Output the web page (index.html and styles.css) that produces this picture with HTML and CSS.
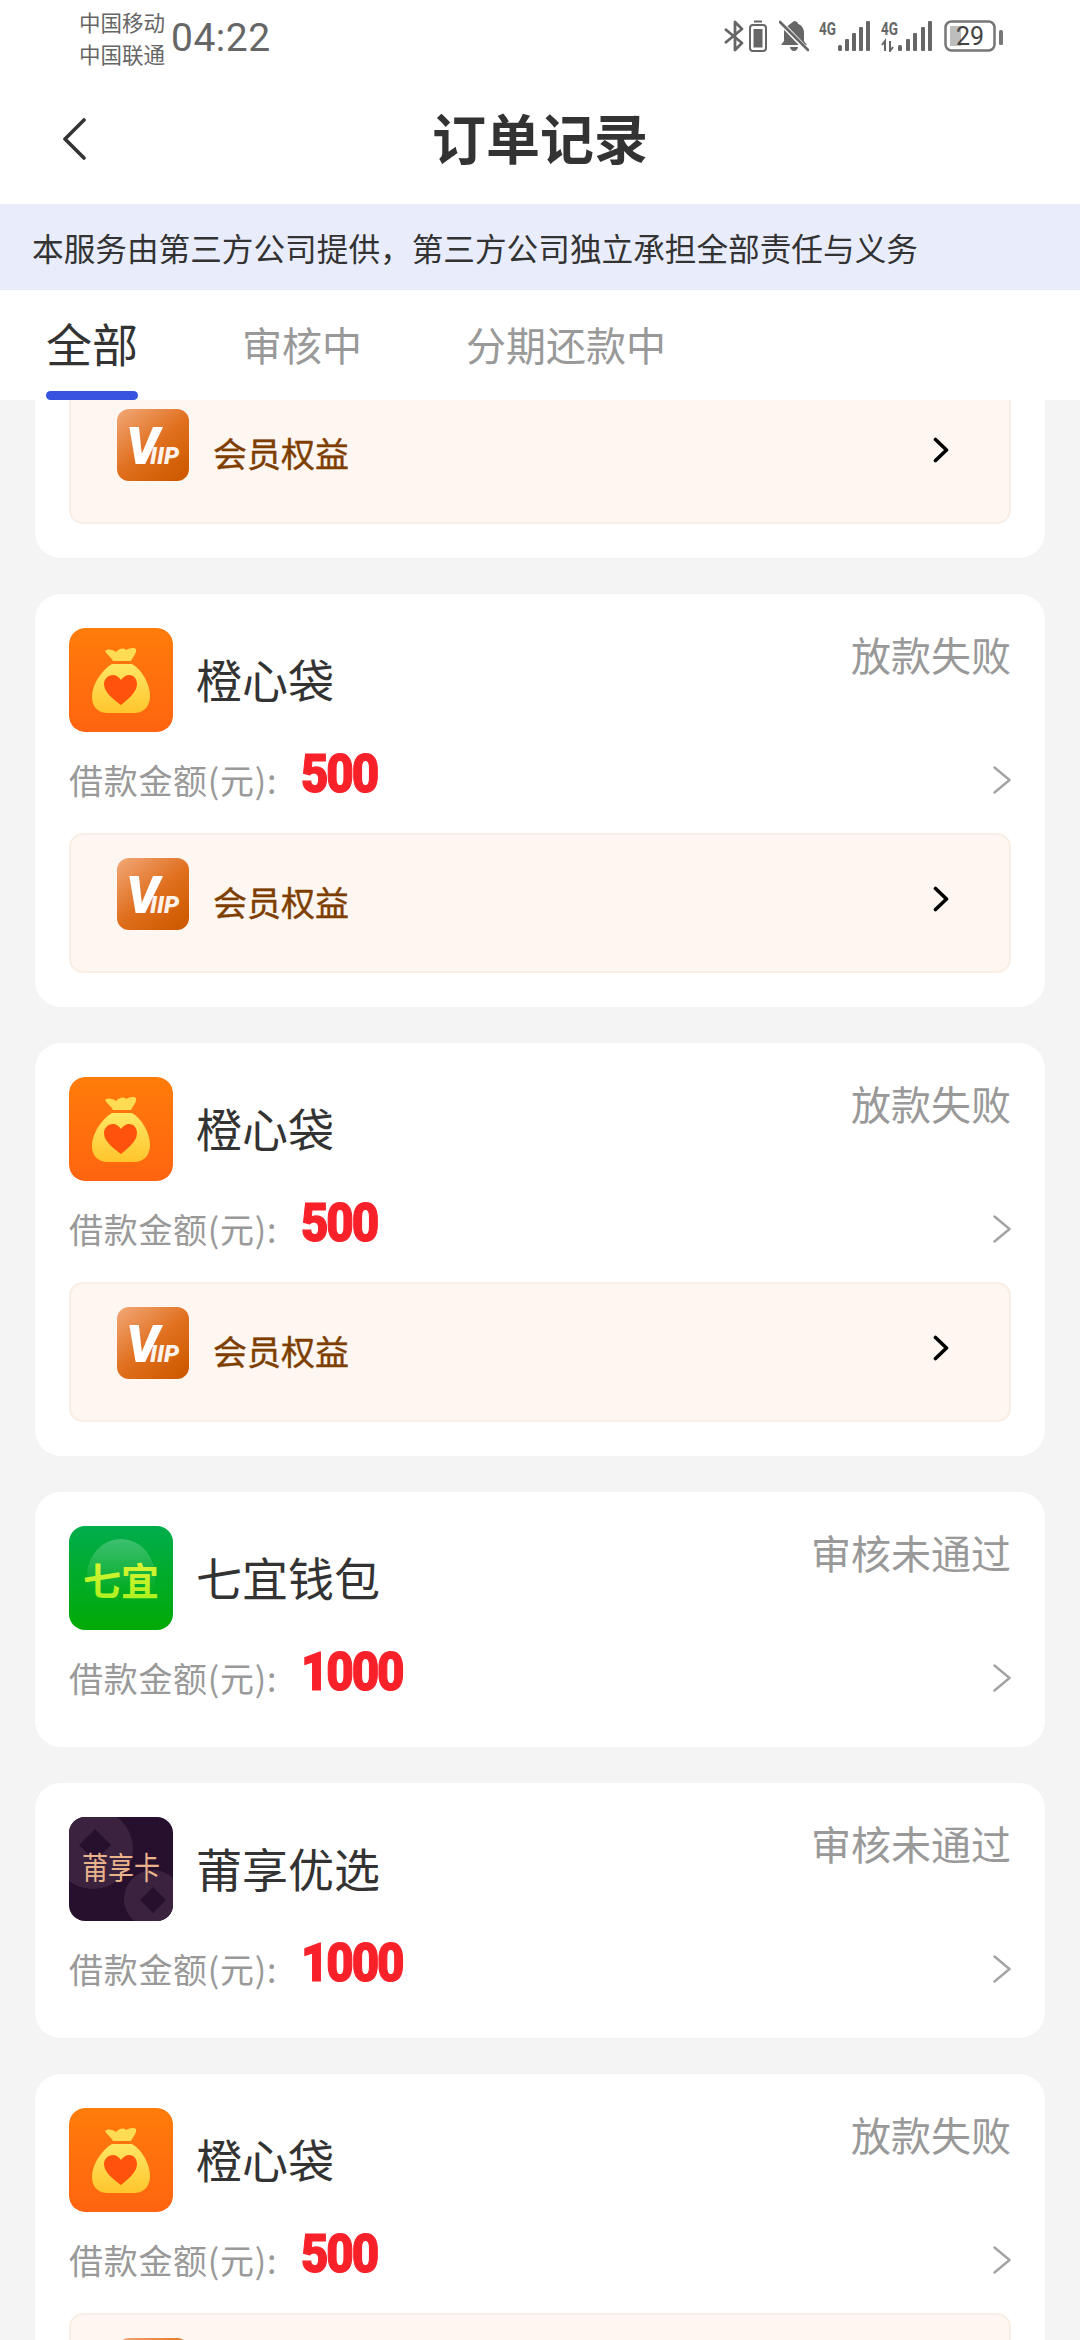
FILE: index.html
```html
<!DOCTYPE html>
<html lang="zh-CN">
<head>
<meta charset="utf-8">
<title>订单记录</title>
<link rel="stylesheet" href="styles.css">
</head>
<body>
<svg class="defs" width="0" height="0" aria-hidden="true">
  <defs>
    <linearGradient id="gOrange" x1="0" y1="0" x2="0" y2="1"><stop offset="0" stop-color="#ff7c0a"/><stop offset="1" stop-color="#ff6410"/></linearGradient>
    <linearGradient id="gBag" x1="0" y1="0" x2="0" y2="1"><stop offset="0" stop-color="#ffe765"/><stop offset="1" stop-color="#ffc52c"/></linearGradient>
    <linearGradient id="gVip" x1="0" y1="0" x2="0.8" y2="1"><stop offset="0" stop-color="#f2a878"/><stop offset="0.55" stop-color="#e0701f"/><stop offset="1" stop-color="#cf5a00"/></linearGradient>
    <linearGradient id="gGreen" x1="0" y1="0" x2="0" y2="1"><stop offset="0" stop-color="#00ad4c"/><stop offset="1" stop-color="#02aa06"/></linearGradient>
    <linearGradient id="gDome" x1="0" y1="0" x2="0" y2="1"><stop offset="0" stop-color="#fff" stop-opacity="0.24"/><stop offset="1" stop-color="#fff" stop-opacity="0"/></linearGradient>
    <linearGradient id="gText" x1="0" y1="0" x2="0" y2="1"><stop offset="0" stop-color="#e6f53a"/><stop offset="1" stop-color="#a6f01c"/></linearGradient>
    <symbol id="bag" viewBox="0 0 104 104">
      <rect width="104" height="104" rx="16" fill="url(#gOrange)"/>
      <path d="M36 23c4-3 8-1 11 1 3-3 7-5 10-2 3-2 8-3 10-1 1 4-3 8-5 12H44c-2-4-6-6-8-10z" fill="#ffdc52"/>
      <path d="M43 36h20c10 6 18 20 18 32 0 11-7 17-16 17H39c-10 0-16-6-16-16 0-13 10-27 20-33z" fill="url(#gBag)"/>
      <path d="M52 77C43 70 35 64 35 56c0-5 4-9 9-9 3 0 6 2 8 5 2-3 5-5 8-5 5 0 8 4 8 9 0 8-8 14-16 21z" fill="#ff530d"/>
    </symbol>
    <symbol id="vip" viewBox="0 0 72 72">
      <rect width="72" height="72" rx="12" fill="url(#gVip)"/>
      <text class="vip-v" x="9" y="55">V</text>
      <text class="vip-ip" x="33" y="55">IIP</text>
    </symbol>
    <symbol id="next-dark" viewBox="0 0 16 26">
      <path d="M2.500 2.500 13.500 13 2.500 23.500" fill="none" stroke="#000" stroke-width="3.600" stroke-linecap="round" stroke-linejoin="round"/>
    </symbol>
    <symbol id="next-grey" viewBox="0 0 18 28">
      <path d="M1.500 1.500 16.500 14 1.500 26.500" fill="none" stroke="#a3a3a3" stroke-width="2.400" stroke-linecap="round" stroke-linejoin="round"/>
    </symbol>
  </defs>
</svg>

<div class="page">
  <header class="status">
    <div class="carriers"><span>中国移动</span><span>中国联通</span></div>
    <div class="clock">04:22</div>
    <div class="status-icons">
      <svg class="ic" width="21" height="32" viewBox="0 0 21 32"><path d="M1 9l17 14-7 7V2l7 7L1 23" fill="none" stroke="#666" stroke-width="2.800" stroke-linejoin="round"/></svg>
      <svg class="ic ic-b" width="18" height="32" viewBox="0 0 18 32"><rect x="5" y="0.500" width="8" height="2" fill="#666"/><rect x="1" y="5" width="16" height="26" rx="3" fill="none" stroke="#666" stroke-width="2"/><rect x="4.500" y="9" width="9" height="18.500" fill="#666"/></svg>
      <svg class="ic ic-c" width="30" height="32" viewBox="0 0 30 32"><path d="M15 1c2 0 4 1 4 3 4 1 6 5 6 9v8l3 4H2l3-4v-8c0-2 0-3 1-5zM11 27h8c0 2-2 4-4 4s-4-2-4-4z" fill="#666"/><path d="M1 2l27 28" stroke="#fff" stroke-width="5"/><path d="M1 2l28 28" stroke="#666" stroke-width="2.600" stroke-linecap="round"/></svg>
      <svg class="ic ic-d" width="51" height="40" viewBox="0 -8 51 40"><text class="net" x="0" y="15" textLength="17" lengthAdjust="spacingAndGlyphs">4G</text><g fill="#666"><rect x="19" y="25" width="4" height="6" rx="1.500"/><rect x="26" y="19" width="4" height="12" rx="1"/><rect x="33" y="13" width="4" height="18" rx="1"/><rect x="40" y="7" width="4" height="24" rx="1"/><rect x="47" y="1" width="4" height="30" rx="1"/></g></svg>
      <svg class="ic ic-e" width="51" height="40" viewBox="0 -8 51 40"><text class="net" x="0" y="15" textLength="17" lengthAdjust="spacingAndGlyphs">4G</text><path d="M4 31V21l-3 4M9 21v10l3-4" fill="none" stroke="#666" stroke-width="2"/><g fill="#666"><rect x="17" y="25" width="4" height="6" rx="1.500"/><rect x="25" y="19" width="4" height="12" rx="1"/><rect x="32" y="13" width="4" height="18" rx="1"/><rect x="40" y="7" width="4" height="24" rx="1"/><rect x="47" y="1" width="4" height="30" rx="1"/></g></svg>
      <svg class="ic ic-f" width="60" height="32" viewBox="0 0 60 32"><rect x="1.500" y="1.500" width="49" height="29" rx="6" fill="none" stroke="#777" stroke-width="2.500"/><rect x="6" y="6" width="11" height="20" fill="#bdbdbd"/><text class="batt" x="12" y="25">29</text><rect x="55" y="10" width="4" height="15" rx="1.500" fill="#777"/></svg>
    </div>
  </header>

  <nav class="nav">
    <svg class="back" width="24" height="42" viewBox="0 0 24 42"><path d="M22 2 3 21l19 19" fill="none" stroke="#333" stroke-width="3.600" stroke-linecap="round" stroke-linejoin="round"/></svg>
    <h1 class="title">订单记录</h1>
  </nav>

  <div class="notice">本服务由第三方公司提供，第三方公司独立承担全部责任与义务</div>

  <div class="tabs">
    <div class="tab tab-active">全部</div>
    <div class="tab">审核中</div>
    <div class="tab tab-wide">分期还款中</div>
  </div>

  <main class="list">
    <section class="card card-tail">
      <div class="vip vip-cut">
        <svg class="vip-icon"><use href="#vip"/></svg>
        <span class="vip-text">会员权益</span>
        <svg class="vip-next"><use href="#next-dark"/></svg>
      </div>
    </section>

    <section class="card">
      <div class="head">
        <svg class="logo"><use href="#bag"/></svg>
        <span class="name">橙心袋</span>
        <span class="state">放款失败</span>
      </div>
      <div class="amount-row">
        <span class="label">借款金额(元):</span><span class="amount">500</span>
        <svg class="row-next"><use href="#next-grey"/></svg>
      </div>
      <div class="vip">
        <svg class="vip-icon"><use href="#vip"/></svg>
        <span class="vip-text">会员权益</span>
        <svg class="vip-next"><use href="#next-dark"/></svg>
      </div>
    </section>

    <section class="card">
      <div class="head">
        <svg class="logo"><use href="#bag"/></svg>
        <span class="name">橙心袋</span>
        <span class="state">放款失败</span>
      </div>
      <div class="amount-row">
        <span class="label">借款金额(元):</span><span class="amount">500</span>
        <svg class="row-next"><use href="#next-grey"/></svg>
      </div>
      <div class="vip">
        <svg class="vip-icon"><use href="#vip"/></svg>
        <span class="vip-text">会员权益</span>
        <svg class="vip-next"><use href="#next-dark"/></svg>
      </div>
    </section>

    <section class="card">
      <div class="head">
        <svg class="logo" viewBox="0 0 104 104">
          <rect width="104" height="104" fill="url(#gGreen)"/>
          <path d="M18 50a34 37 0 0 1 68 0v16H18z" fill="url(#gDome)"/>
          <text class="logo-green" x="52" y="69">七宜</text>
        </svg>
        <span class="name">七宜钱包</span>
        <span class="state">审核未通过</span>
      </div>
      <div class="amount-row">
        <span class="label">借款金额(元):</span><span class="amount">1000</span>
        <svg class="row-next"><use href="#next-grey"/></svg>
      </div>
    </section>

    <section class="card">
      <div class="head">
        <svg class="logo" viewBox="0 0 104 104">
          <rect width="104" height="104" fill="#26102e"/>
          <circle cx="24" cy="32" r="40" fill="#3b2340"/>
          <circle cx="84" cy="82" r="29" fill="#3b2340"/>
          <path d="M26 12l16 16-16 16-16-16zM84 70l13 13-13 13-13-13z" fill="#26102e"/>
          <text class="logo-purple" transform="translate(52 62) scale(1 1.2)">莆享卡</text>
        </svg>
        <span class="name">莆享优选</span>
        <span class="state">审核未通过</span>
      </div>
      <div class="amount-row">
        <span class="label">借款金额(元):</span><span class="amount">1000</span>
        <svg class="row-next"><use href="#next-grey"/></svg>
      </div>
    </section>

    <section class="card">
      <div class="head">
        <svg class="logo"><use href="#bag"/></svg>
        <span class="name">橙心袋</span>
        <span class="state">放款失败</span>
      </div>
      <div class="amount-row">
        <span class="label">借款金额(元):</span><span class="amount">500</span>
        <svg class="row-next"><use href="#next-grey"/></svg>
      </div>
      <div class="vip">
        <svg class="vip-icon"><use href="#vip"/></svg>
      </div>
    </section>
  </main>
</div>
</body>
</html>
```
FILE: styles.css
```css
* { box-sizing: border-box; }
html, body { margin: 0; padding: 0; }
body {
  width: 1080px;
  height: 2340px;
  overflow: hidden;
  background: #fff;
  font-family: "Noto Sans CJK SC", "Noto Sans", sans-serif;
  color: #333;
}
.defs { position: absolute; }
.page { display: flex; flex-direction: column; height: 2340px; }

/* status bar */
.status {
  height: 70px;
  flex: none;
  display: flex;
  align-items: flex-start;
  padding: 0 76px 0 79px;
  color: #666;
}
.carriers {
  display: flex;
  flex-direction: column;
  font-size: 21.500px;
  line-height: 32px;
  padding-top: 6px;
  width: 92px;
}
.clock {
  font-family: "Roboto", sans-serif;
  font-size: 39px;
  line-height: 40px;
  padding-top: 18px;
  letter-spacing: 0.5px;
}
.status-icons {
  margin-left: auto;
  display: flex;
  align-items: flex-start;
  padding-top: 20px;
}
.ic { display: block; flex: none; }
.ic-b { margin-left: 4px; }
.ic-c { margin-left: 12px; }
.ic-d { margin: -8px 0 0 10px; }
.ic-e { margin: -8px 0 0 11px; }
.ic-f { margin-left: 12px; }
.net { font: 700 19px "Roboto", sans-serif; fill: #666; }
.batt { font: 400 25px "Roboto", sans-serif; fill: #444; }

/* nav */
.nav {
  height: 134px;
  flex: none;
  position: relative;
  display: flex;
  align-items: center;
  justify-content: center;
}
.back { position: absolute; left: 62px; top: 48px; }
.title {
  margin: 0;
  font-size: 54px;
  line-height: 70px;
  font-weight: 700;
  color: #333;
}

/* notice */
.notice {
  height: 86px;
  flex: none;
  background: #e9edfb;
  padding-left: 32px;
  font-size: 31.650px;
  line-height: 86px;
  color: #333;
  white-space: nowrap;
}

/* tabs */
.tabs {
  height: 110px;
  flex: none;
  display: flex;
  padding-left: 46px;
  gap: 104px;
  background: #fff;
}
.tab {
  font-size: 40px;
  line-height: 60px;
  padding-top: 24px;
  color: #999;
  white-space: nowrap;
}
.tab-active {
  font-size: 46px;
  padding-top: 22px;
  color: #333;
  position: relative;
  height: 110px;
}
.tab-active::after {
  content: "";
  position: absolute;
  left: 0;
  right: 0;
  bottom: 0;
  height: 9px;
  border-radius: 5px;
  background: #3853e0;
}

/* list */
.list {
  flex: 1;
  min-height: 0;
  overflow: hidden;
  background: #f4f4f4;
  display: flex;
  flex-direction: column;
  gap: 36px;
  padding: 0 35px;
}
.card {
  flex: none;
  background: #fff;
  border-radius: 26px;
  padding: 34px;
}
.card-tail {
  padding-top: 0;
  border-radius: 0 0 26px 26px;
}
.head { display: flex; align-items: flex-start; }
.logo { width: 104px; height: 104px; flex: none; display: block; border-radius: 16px; overflow: hidden; }
.name {
  font-size: 46px;
  line-height: 60px;
  margin: 20px 0 0 23px;
  color: #333;
}
.state {
  margin-left: auto;
  margin-top: -2px;
  font-size: 40px;
  line-height: 56px;
  color: #999;
  white-space: nowrap;
}
.logo-green {
  font: 700 38px "Noto Sans CJK SC", sans-serif;
  fill: url(#gText);
  text-anchor: middle;
}
.logo-purple {
  font: 400 26px "Noto Sans CJK SC", sans-serif;
  fill: #eab38c;
  text-anchor: middle;
}

.amount-row {
  display: flex;
  align-items: center;
  height: 60px;
  margin: 18px 0 5px;
}
.label {
  font-size: 34px;
  line-height: 48px;
  letter-spacing: 0.7px;
  color: #999;
  width: 232px;
  white-space: nowrap;
}
.amount {
  font-family: "Roboto", sans-serif;
  font-weight: 900;
  font-size: 54px;
  line-height: 48px;
  letter-spacing: -2.500px;
  color: #f8212a;
  -webkit-text-stroke: 1.200px #f8212a;
  margin-bottom: 12px;
  transform: scaleX(0.88);
  transform-origin: left center;
}
.row-next { width: 18px; height: 28px; margin-left: auto; display: block; }

.vip {
  height: 140px;
  margin-top: 23px;
  display: flex;
  align-items: flex-start;
  padding: 23px 60px 0 46px;
  background: #fdf6f1;
  border: 2px solid #f9eee6;
  border-radius: 14px;
}
.vip-cut { margin-top: -16px; }
.vip-icon { width: 72px; height: 72px; flex: none; display: block; }
.vip-text {
  font-size: 34px;
  line-height: 48px;
  font-weight: 400;
  color: #7e3e00;
  -webkit-text-stroke: 0.4px #7e3e00;
  margin: 20px 0 0 24px;
}
.vip-next { width: 16px; height: 26px; margin: 28px 0 0 auto; display: block; }
.vip-v {
  font: italic 900 52px "Roboto", sans-serif;
  fill: #fff;
}
.vip-ip {
  font: italic 900 24px "Roboto", sans-serif;
  fill: #fff;
  opacity: 0.92;
}
```
